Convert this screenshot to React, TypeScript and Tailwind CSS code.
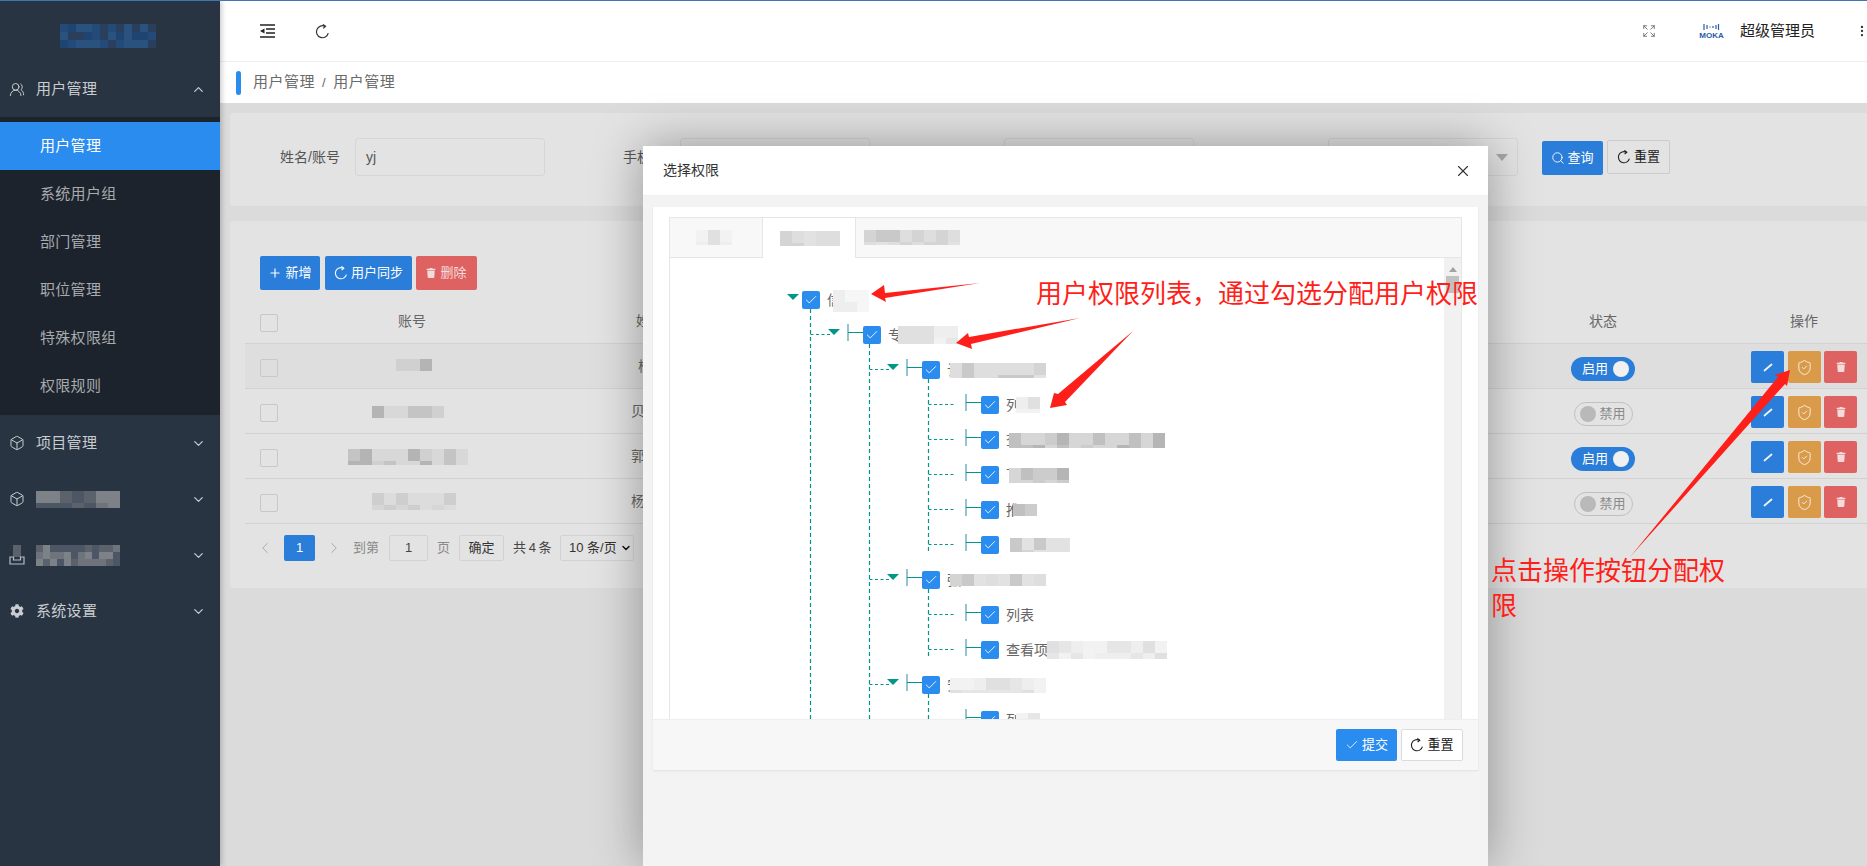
import React from "react";
import {
  Box,
  Check,
  ChevronDown,
  ChevronLeft,
  ChevronRight,
  ChevronUp,
  EllipsisVertical,
  Expand,
  Plus,
  Search,
  ShieldCheck,
  UsersRound,
  X,
} from "lucide-react";
import { FaTrash, FaCog } from "react-icons/fa";

function Mosaic({
  w,
  h,
  shades,
  seed = 1,
  cell = 12,
}: {
  w: number;
  h: number;
  shades: string[];
  seed?: number;
  cell?: number;
}) {
  const cols = Math.ceil(w / cell);
  const rows = Math.ceil(h / cell);
  const cells = [];
  for (let i = 0; i < cols * rows; i++) {
    const v = Math.abs(Math.sin((i + 1) * 12.9898 * seed) * 43758.5453) % 1;
    cells.push(
      <div
        key={i}
        style={{ width: cell, height: cell, backgroundColor: shades[Math.floor(v * shades.length)] }}
      />
    );
  }
  return (
    <div className="flex flex-wrap overflow-hidden shrink-0" style={{ width: cols * cell, height: h }}>
      {cells}
    </div>
  );
}

const LIGHT = ["#eeeeee", "#e6e6e6", "#f2f2f2", "#e0e0e0"];
const MID = ["#dedede", "#d4d4d4", "#c9c9c9", "#e2e2e2"];
const DARK = ["#cccccc", "#c0c0c0", "#b5b5b5", "#d6d6d6"];
const TABLE = ["#d0d0d0", "#c4c4c4", "#b4b4b4", "#d8d8d8"];
const SIDE = ["#6e737c", "#5c626c", "#7d8188", "#4c5664"];
const LOGO = ["#234a78", "#1f4471", "#2a527f", "#2a3f5c"];

function Refresh({ size = 14, className }: { size?: number; className?: string }) {
  return (
    <svg width={size} height={size} viewBox="0 0 14 14" fill="none" className={className}>
      <path d="M9.5 2.2A5.6 5.6 0 1 0 12.4 8.6" stroke="currentColor" strokeWidth="1.1" />
      <path d="M7.4 0.4L9.8 2.2L7.6 4" stroke="currentColor" strokeWidth="1.1" />
    </svg>
  );
}

function MenuTop({
  icon,
  label,
  open,
}: {
  icon: React.ReactNode;
  label: React.ReactNode;
  open?: boolean;
}) {
  return (
    <div className="h-14 flex items-center pl-[9px] pr-[14px] text-[15px] tracking-[0.3px] text-[#c9ccd0]">
      <span className="w-[16px] h-[20px] flex items-center justify-center shrink-0">{icon}</span>
      <span className="ml-[11px] flex-1 flex items-center">{label}</span>
      {open ? <ChevronUp size={15} strokeWidth={2} /> : <ChevronDown size={15} strokeWidth={2} />}
    </div>
  );
}

function SubItem({ label, active }: { label: string; active?: boolean }) {
  return (
    <div
      className={
        active
          ? "h-12 flex items-center pl-[40px] text-[15px] tracking-[0.3px] bg-[#2b8cef] text-white"
          : "h-12 flex items-center pl-[40px] text-[15px] tracking-[0.3px] text-[#a7aaae]"
      }
    >
      {label}
    </div>
  );
}

function TrayIcon() {
  return (
    <svg width="16" height="20" viewBox="0 0 16 20" fill="none">
      <rect x="4" y="0" width="8" height="12" fill="#5c626c" />
      <path d="M1 12V19H15V12H11.5V15H4.5V12Z" stroke="#b8bbc0" strokeWidth="1.2" />
    </svg>
  );
}

function Sidebar() {
  return (
    <aside className="w-[220px] shrink-0 bg-[#283442] flex flex-col relative z-10 shadow-[2px_0_5px_rgba(0,0,0,0.2)]">
      <div className="h-[60px] pl-[60px] pt-[23px]">
        <Mosaic w={96} h={24} shades={LOGO} seed={2} cell={8} />
      </div>
      <MenuTop icon={<UsersRound size={17} strokeWidth={1.5} />} label="用户管理" open />
      <div className="bg-[#1d232c] py-[5px]">
        <SubItem label="用户管理" active />
        <SubItem label="系统用户组" />
        <SubItem label="部门管理" />
        <SubItem label="职位管理" />
        <SubItem label="特殊权限组" />
        <SubItem label="权限规则" />
      </div>
      <MenuTop icon={<Box size={16} strokeWidth={1.5} />} label="项目管理" />
      <MenuTop
        icon={<Box size={16} strokeWidth={1.5} />}
        label={<Mosaic w={84} h={17} shades={SIDE} seed={3} />}
      />
      <MenuTop icon={<TrayIcon />} label={<Mosaic w={84} h={21} shades={SIDE} seed={4} cell={7} />} />
      <MenuTop icon={<FaCog size={14} />} label="系统设置" />
    </aside>
  );
}

function Header() {
  return (
    <div className="h-[61px] bg-white border-b border-[#eeeeee] flex items-center pl-[40px] pr-0 text-[#222222] shrink-0">
      <svg width="15" height="14" viewBox="0 0 15 14" className="-mt-[1px]">
        <path d="M0 1H15M6 5H15M6 9H15M0 13H15" stroke="#222222" strokeWidth="1.6" />
        <polygon points="0,7 4.5,4.5 4.5,9.5" fill="#222222" />
      </svg>
      <Refresh size={15} className="ml-[40px] text-[#333333]" />
      <div className="flex-1" />
      <Expand size={14} strokeWidth={1.3} className="text-[#555555]" />
      <div className="ml-[39px] w-[33px] flex flex-col items-center">
        <svg width="18" height="8" viewBox="0 0 18 8" className="text-[#2a5caa]">
          <path
            d="M2 1v6M5 2v4M8 3.5v1M11 3v2M14 2v4M16.5 1v6"
            stroke="currentColor"
            strokeWidth="1.2"
          />
        </svg>
        <span className="text-[8px] leading-[8px] font-bold text-[#2a5caa] mt-px">MOKA</span>
      </div>
      <span className="ml-[12px] text-[15px] text-[#222222]">超级管理员</span>
      <EllipsisVertical size={14} className="ml-[40px] -mr-[2px] text-[#333333]" />
    </div>
  );
}

function Breadcrumb() {
  return (
    <div className="h-[41px] bg-white flex items-center pl-[16px] text-[15px] tracking-[0.5px] text-[#6a6a6a] shrink-0">
      <div className="w-[5px] h-[24px] rounded bg-[#2b8cef]" />
      <span className="ml-[12px]">用户管理</span>
      <span className="mx-[7px] text-[13px]">/</span>
      <span>用户管理</span>
    </div>
  );
}

function Field({ className, children }: { className?: string; children?: React.ReactNode }) {
  return (
    <div
      className={
        "w-[190px] h-[38px] border border-[#d6d6d6] rounded-[3px] flex items-center pl-[10px] text-[14px] text-[#555555] shrink-0 " +
        (className ?? "")
      }
    >
      {children}
    </div>
  );
}

function SearchCard() {
  return (
    <div className="h-[93px] bg-[#e3e3e3] rounded-l-[3px] flex items-center pl-[50px] pb-[5px] text-[14px] text-[#555555]">
      <span className="w-[60px] shrink-0">姓名/账号</span>
      <Field className="ml-[15px]">yj</Field>
      <span className="ml-[78px] w-[57px] shrink-0">手机号</span>
      <Field />
      <Field className="ml-[134px]" />
      <Field className="ml-[134px] relative">
        <span className="absolute right-[9px] top-[15px] w-0 h-0 border-x-[6px] border-x-transparent border-t-[7px] border-t-[#a8a8a8]" />
      </Field>
      <button className="ml-[24px] w-[61px] h-[34px] bg-[#2a7dd8] text-white rounded-[2px] text-[13px] flex items-center justify-center gap-[2px] shrink-0 mt-[2px]">
        <Search size={14} strokeWidth={1.5} />
        查询
      </button>
      <button className="ml-[4px] w-[63px] h-[34px] border border-[#cccccc] text-[#222222] rounded-[2px] text-[13px] flex items-center justify-center gap-[3px] shrink-0">
        <Refresh />
        重置
      </button>
    </div>
  );
}

function TrashIcon({ size = 10 }: { size?: number }) {
  return <FaTrash size={size} />;
}

function ActionButtons() {
  return (
    <div className="ml-[98px] flex w-[106px] shrink-0 text-[#f6ecdf] mt-[2px]">
      <div className="w-[33px] h-[32px] rounded-[2px] bg-[#2a7dd8] flex items-center justify-center">
        <svg width="12" height="12" viewBox="0 0 12 12">
          <path d="M2.5 9.5 L9.5 3.5" stroke="#eef2f6" strokeWidth="1.8" strokeLinecap="round" />
        </svg>
      </div>
      <div className="ml-[4px] w-[33px] h-[32px] rounded-[2px] bg-[#d99a4a] flex items-center justify-center">
        <ShieldCheck size={17} strokeWidth={1.4} />
      </div>
      <div className="ml-[3px] w-[33px] h-[32px] rounded-[2px] bg-[#de6262] flex items-center justify-center text-[#f5dcdc]">
        <TrashIcon />
      </div>
    </div>
  );
}

function Toggle({ on }: { on: boolean }) {
  if (on) {
    return (
      <div className="w-[64px] h-[24px] mt-[6px] rounded-full bg-[#2a7dd8] flex items-center pl-[11px] pr-[6px] text-[13px] text-white justify-between">
        启用
        <span className="w-[16px] h-[16px] rounded-full bg-[#f0f0f0]" />
      </div>
    );
  }
  return (
    <div className="w-[59px] h-[24px] mt-[6px] rounded-full border border-[#c0c0c0] flex items-center pl-[5px] pr-[6px] text-[13px] text-[#8a8a8a] justify-between">
      <span className="w-[16px] h-[16px] rounded-full bg-[#b9b9b9]" />
      禁用
    </div>
  );
}

function Checkbox({ className }: { className?: string }) {
  return (
    <div className={"w-[18px] h-[18px] border border-[#c8c8c8] rounded-[2px] shrink-0 " + (className ?? "")} />
  );
}

const rows = [
  { on: true, name: "杨", pad: "pl-[92px]", mask: <div className="ml-[118px] -mt-[2px]"><Mosaic w={36} h={12} shades={TABLE} seed={7} /></div>, bg: "bg-[#dedede]" },
  { on: false, name: "贝", pad: "pl-[85px]", mask: <div className="ml-[94px] mt-[1px]"><Mosaic w={72} h={12} shades={TABLE} seed={8} /></div>, bg: "" },
  { on: true, name: "郭", pad: "pl-[85px]", mask: <div className="ml-[70px] mt-[2px]"><Mosaic w={120} h={16} shades={TABLE} seed={9} /></div>, bg: "" },
  { on: false, name: "杨", pad: "pl-[85px]", mask: <div className="ml-[94px] mt-[1px]"><Mosaic w={84} h={17} shades={["#d6d6d6", "#cecece", "#dcdcdc"]} seed={6} /></div>, bg: "" },
];

function Table() {
  return (
    <div className="ml-[15px] text-[14px] text-[#666666]">
      <div className="h-[44px] flex items-center pl-[15px] border-b border-[#d2d2d2]">
        <Checkbox className="mt-[3px]" />
        <div className="w-[268px] text-center shrink-0">账号</div>
        <div className="w-[208px] pl-[90px] shrink-0">姓名</div>
        <div className="w-[799px] shrink-0" />
        <div className="w-[100px] text-center shrink-0">状态</div>
        <div className="ml-[98px] w-[106px] text-center shrink-0">操作</div>
      </div>
      {rows.map((r, i) => (
        <div key={i} className={"h-[45px] flex items-center pl-[15px] border-b border-[#d2d2d2] " + r.bg}>
          <Checkbox className="mt-[4px]" />
          <div className="w-[268px] shrink-0">{r.mask}</div>
          <div className={"w-[208px] shrink-0 " + r.pad}>{r.name}</div>
          <div className="w-[799px] shrink-0" />
          <div className="w-[100px] flex justify-center shrink-0">
            <Toggle on={r.on} />
          </div>
          <ActionButtons />
        </div>
      ))}
    </div>
  );
}

function Pagination() {
  return (
    <div className="ml-[30px] mt-[11px] h-[26px] flex items-center text-[13px] text-[#8a8a8a]">
      <ChevronLeft size={18} strokeWidth={1.3} className="text-[#a8a8a8] -ml-[4px]" />
      <div className="ml-[10px] w-[31px] h-[26px] rounded-[2px] bg-[#2a7dd8] text-white flex items-center justify-center">
        1
      </div>
      <ChevronRight size={18} strokeWidth={1.3} className="ml-[10px] text-[#a8a8a8]" />
      <span className="ml-[10px] w-[26px] shrink-0">到第</span>
      <div className="ml-[10px] w-[39px] h-[26px] border border-[#d2d2d2] rounded-[2px] flex items-center justify-center text-[#444444]">
        1
      </div>
      <span className="ml-[9px]">页</span>
      <div className="ml-[9px] w-[45px] h-[26px] border border-[#d2d2d2] rounded-[2px] flex items-center justify-center text-[#333333]">
        确定
      </div>
      <span className="ml-[9px] w-[36px] shrink-0 whitespace-nowrap tracking-[-0.5px] text-[#444444]">共 4 条</span>
      <div className="ml-[11px] w-[74px] h-[26px] border border-[#d2d2d2] rounded-[2px] flex items-center pl-[8px] gap-[3px] text-[#333333] whitespace-nowrap">
        10 条/页
        <ChevronDown size={12} strokeWidth={3} className="text-[#111111]" />
      </div>
    </div>
  );
}

function TableCard() {
  return (
    <div className="mt-[15px] h-[367px] bg-[#e3e3e3] rounded-l-[3px]">
      <div className="pt-[35px] pl-[30px] flex text-[13px] text-white">
        <button className="w-[60px] h-[34px] bg-[#2a7dd8] rounded-[2px] flex items-center justify-center gap-[3px]">
          <Plus size={14} strokeWidth={2} />
          新增
        </button>
        <button className="ml-[5px] w-[87px] h-[34px] bg-[#2a7dd8] rounded-[2px] flex items-center justify-center gap-[3px]">
          <Refresh />
          用户同步
        </button>
        <button className="ml-[4px] w-[61px] h-[34px] bg-[#de6262] rounded-[2px] flex items-center justify-center gap-[4px] text-[#f5dcdc]">
          <TrashIcon />
          删除
        </button>
      </div>
      <div className="mt-[10px]">
        <Table />
        <Pagination />
      </div>
    </div>
  );
}

type TreeRow = { level: number; label?: string; mask?: React.ReactNode };

const treeRows: TreeRow[] = [
  { level: 1, label: "信", mask: <div className="-ml-[8px] mt-[2px]"><Mosaic w={36} h={22} shades={["#eeeeee", "#f6f6f6", "#e8e8e8"]} seed={11} /></div> },
  { level: 2, label: "专", mask: <div className="-ml-[4px]"><Mosaic w={60} h={18} shades={LIGHT} seed={12} /></div> },
  { level: 3, label: "订", mask: <div className="-ml-[11px]"><Mosaic w={96} h={15} shades={MID} seed={13} /></div> },
  { level: 4, label: "列", mask: <div className="-ml-[4px]"><Mosaic w={24} h={16} shades={LIGHT} seed={14} /></div> },
  { level: 4, label: "查", mask: <div className="-ml-[11px]"><Mosaic w={156} h={15} shades={DARK} seed={15} /></div> },
  { level: 4, label: "下", mask: <div className="-ml-[11px]"><Mosaic w={60} h={15} shades={DARK} seed={16} /></div> },
  { level: 4, label: "推", mask: <div className="-ml-[7px]"><Mosaic w={24} h={12} shades={DARK} seed={17} /></div> },
  { level: 4, mask: <div className="ml-[4px]"><Mosaic w={60} h={14} shades={MID} seed={18} /></div> },
  { level: 3, label: "强", mask: <div className="-ml-[11px]"><Mosaic w={96} h={12} shades={MID} seed={19} /></div> },
  { level: 4, label: "列表" },
  { level: 4, label: "查看项", mask: <div className="-ml-[1px]"><Mosaic w={120} h={18} shades={LIGHT} seed={20} /></div> },
  { level: 3, label: "安", mask: <div className="-ml-[11px]"><Mosaic w={96} h={15} shades={LIGHT} seed={21} /></div> },
  { level: 4, label: "列", mask: <div className="-ml-[4px]"><Mosaic w={24} h={14} shades={LIGHT} seed={22} /></div> },
];

const indent: Record<number, string> = {
  1: "pl-[132px]",
  2: "pl-[193px]",
  3: "pl-[252px]",
  4: "pl-[311px]",
};

function TreeLines() {
  const top = (i: number) => 291 + i * 35;
  const cbX: Record<number, number> = { 2: 863, 3: 922, 4: 981 };
  const parentX: Record<number, number> = { 2: 810.5, 3: 869.5, 4: 928.5 };
  const teal = "#009688";
  return (
    <svg className="absolute left-0 top-0 pointer-events-none" width="776" height="461" viewBox="670 258 776 461">
      <g stroke={teal} strokeWidth="1.2" strokeDasharray="4 3" fill="none">
        <path d="M810.5 309V719" />
        <path d="M869.5 344V719" />
        <path d="M928.5 379V554" />
        <path d="M928.5 589V659" />
        <path d="M928.5 694V719" />
      </g>
      {treeRows.map((r, i) => {
        const t = top(i);
        if (r.level === 1) {
          return <polygon key={i} points={`787,${t + 3} 799,${t + 3} 793,${t + 9}`} fill={teal} />;
        }
        const cx = cbX[r.level];
        const px = parentX[r.level];
        const hasTri = r.level < 4;
        return (
          <g key={i}>
            <path
              d={`M${px} ${t + 8.5}H${hasTri ? px + 22 : px + 25}`}
              stroke={teal}
              strokeWidth="1"
              strokeDasharray="3 2.5"
              fill="none"
            />
            {hasTri && (
              <polygon
                points={`${cx - 35},${t + 3} ${cx - 23},${t + 3} ${cx - 29},${t + 9}`}
                fill={teal}
              />
            )}
            <path d={`M${cx - 15} ${t - 2}V${t + 15}`} stroke="#4a9fb0" strokeWidth="1.2" />
            <path d={`M${cx - 15} ${t + 6.5}H${cx}`} stroke={teal} strokeWidth="1" />
          </g>
        );
      })}
    </svg>
  );
}

function TreeCheck() {
  return (
    <div className="w-[18px] h-[18px] rounded-[2px] bg-[#2b8cef] flex items-center justify-center shrink-0">
      <Check size={14} strokeWidth={1.5} className="text-white" />
    </div>
  );
}

function Tree() {
  return (
    <div className="relative h-[461px] overflow-hidden bg-white pt-[33px]">
      <TreeLines />
      {treeRows.map((r, i) => (
        <div key={i} className={"h-[35px] flex items-start relative text-[14px] text-[#666666] " + indent[r.level]}>
          <TreeCheck />
          <div className="ml-[7px] h-[18px] flex items-center">
            {r.label && <span className="leading-[18px]">{r.label}</span>}
            {r.mask}
          </div>
        </div>
      ))}
      <div className="absolute right-0 top-0 bottom-0 w-[17px] bg-[#f1f1f1]">
        <div className="mx-auto mt-[9px] w-0 h-0 border-x-[4px] border-x-transparent border-b-[5px] border-b-[#a3a3a3]" />
        <div className="mx-[2px] mt-[4px] h-[17px] bg-[#c1c1c1]" />
      </div>
    </div>
  );
}

function Modal() {
  return (
    <div className="absolute left-[643px] top-[145px] bottom-0 w-[845px] bg-[#f3f3f3] rounded-t-[2px] shadow-[0_0_50px_rgba(0,0,0,0.35)] flex flex-col z-20">
      <div className="h-[50px] bg-white flex items-center justify-between pl-[20px] pr-[16px] text-[14px] text-[#333333] shrink-0 border-b border-[#f0f0f0]">
        <span>选择权限</span>
        <X size={18} strokeWidth={1.5} className="text-[#333333]" />
      </div>
      <div className="mt-[11px] mx-[10px] shadow-[0_1px_2px_rgba(0,0,0,0.08)]">
        <div className="bg-white pt-[10px] px-[16px]">
          <div className="border-x border-t border-[#e6e6e6]">
            <div className="h-[40px] bg-[#f8f8f8] border-b border-[#e6e6e6] flex">
              <div className="w-[92px] flex items-center pl-[26px]">
                <Mosaic w={36} h={15} shades={LIGHT} seed={31} />
              </div>
              <div className="w-[94px] h-[40px] bg-white border-x border-[#e6e6e6] flex items-center pl-[17px]">
                <Mosaic w={60} h={15} shades={MID} seed={32} />
              </div>
              <div className="flex items-center pl-[8px]">
                <Mosaic w={96} h={15} shades={MID} seed={33} />
              </div>
            </div>
            <Tree />
          </div>
        </div>
        <div className="h-[51px] bg-[#f7f7f7] border-t border-[#eeeeee] flex items-center justify-end pr-[15px] text-[13px]">
          <button className="w-[61px] h-[32px] rounded-[2px] bg-[#2b8cef] text-white flex items-center justify-center gap-[3px]">
            <Check size={14} strokeWidth={1.4} />
            提交
          </button>
          <button className="ml-[4px] w-[62px] h-[32px] rounded-[2px] bg-white border border-[#d8dbe2] text-[#222222] flex items-center justify-center gap-[3px]">
            <Refresh />
            重置
          </button>
        </div>
      </div>
    </div>
  );
}

function Annotations() {
  const red = "#ff1f1a";
  return (
    <>
      <svg className="absolute left-0 -top-[1px] pointer-events-none z-30" width="1867" height="866" viewBox="0 0 1867 866">
        <polygon points="980,283 885,293 884,285 871,294 886,302 885,298" fill={red} />
        <polygon points="1080,318 969,337 968,333 956,343 972,349 971,344" fill={red} />
        <polygon points="1133,331 1058,394 1054,393 1050,408 1067,405 1065,402" fill={red} />
        <polygon points="1630,557 1778,377 1775,375 1790,370 1787,386 1785,384" fill={red} />
      </svg>
      <div className="absolute left-[1036px] top-[276px] text-[26px] leading-[35px] text-[#ff1f1a] whitespace-nowrap z-30">
        用户权限列表，通过勾选分配用户权限
      </div>
      <div className="absolute left-[1491px] top-[553px] w-[240px] text-[26px] leading-[35px] text-[#ff1f1a] z-30">
        点击操作按钮分配权限
      </div>
    </>
  );
}

export default function App() {
  return (
    <div className="relative w-[1867px] h-[866px] overflow-hidden border-t border-[#3f77b5] flex bg-[#dbdbdb] font-['Liberation_Sans','Noto_Sans_CJK_SC',sans-serif]">
      <Sidebar />
      <main className="flex-1 min-w-0 flex flex-col">
        <Header />
        <Breadcrumb />
        <div className="flex-1 pl-[10px] pt-[10px] overflow-hidden">
          <SearchCard />
          <TableCard />
        </div>
      </main>
      <Modal />
      <Annotations />
    </div>
  );
}
